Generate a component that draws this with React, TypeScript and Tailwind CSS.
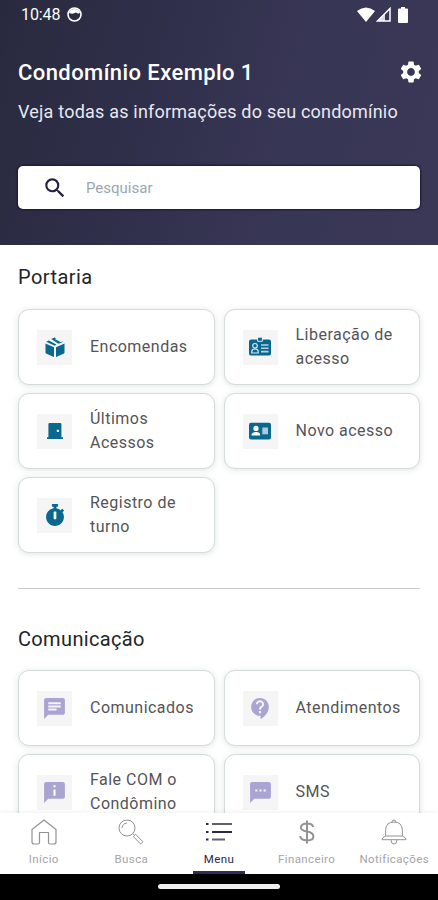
import type { ReactNode } from 'react'
import { MdChat, MdContactSupport, MdSearch, MdSettings, MdSms } from 'react-icons/md'
import { FaStopwatch } from 'react-icons/fa'

interface MenuItem {
  label: string
  icon:  ReactNode
}

function BoxIcon() {
  return (
    <svg width="20" height="20" viewBox="0 0 20 20" fill="currentColor">
      <path d="M.5 6.6 9 10.2V20L1.5 16.8Q.5 16.4.5 15.4ZM19.5 6.6 11 10.2V20L18.5 16.8Q19.5 16.4 19.5 15.4Z" />
      <path d="M1.2 4.7 3.8 3.4 11.4 7.4 9.8 8.8ZM6.2 2.1 9.6.4 11.2 1.2 9.8 2 15.4 5 18.8 4.4 13.4 6.7Z" />
    </svg>
  )
}

function BadgeIcon() {
  return (
    <svg width="22" height="20" viewBox="0 0 22 20" fill="none" stroke="#fff">
      <path d="M2 2.5H9V.8H13V2.5H20Q22 2.5 22 4.5V16.5Q22 18.5 20 18.5H2Q0 18.5 0 16.5V4.5Q0 2.5 2 2.5Z" fill="currentColor" stroke="none" />
      <path d="M8.6 2V4.3H13.4V2" strokeWidth="1" strokeOpacity=".8" />
      <circle cx="6" cy="8.8" r="2.3" strokeWidth="1.2" strokeOpacity=".85" />
      <path d="M2.8 16V14.5Q2.8 12 6 12T9.2 14.5V16Z" strokeWidth="1.2" strokeOpacity=".85" />
      <path d="M12 8H19.5M12 11.3H19.5M12 14.6H19.5" strokeWidth="1.6" strokeOpacity=".7" />
    </svg>
  )
}

function DoorIcon() {
  return (
    <svg width="16" height="18" viewBox="0 0 16 18" fill="currentColor">
      <path fillRule="evenodd" d="M2.6 1H13.2Q14.4 1 14.4 2.2V15.2H16V17H0V15.2H1.4V2.2Q1.4 1 2.6 1ZM9.8 7.8V10H12V7.8Z" />
    </svg>
  )
}

function CardIcon() {
  return (
    <svg width="22" height="18" viewBox="0 0 22 18">
      <rect y=".8" width="22" height="16.6" rx="2" fill="currentColor" />
      <circle cx="7" cy="6.4" r="2.6" fill="#fff" />
      <path d="M2.4 13.6Q2.6 10 7 10T11.2 13.6Z" fill="#fff" />
      <path d="M13.3 5.5H19V12.3H13.3Z" fill="#fff" fillOpacity=".65" />
    </svg>
  )
}

function InfoChatIcon() {
  return (
    <svg width="25" height="25" viewBox="0 0 24 24" fill="currentColor">
      <path d="M4 2H20Q22 2 22 4V16Q22 18 20 18H6L2 22V4Q2 2 4 2Z" />
      <path d="M11 5H13V7H11ZM11 9H13V15H11Z" fill="#fff" />
    </svg>
  )
}

const PORTARIA: MenuItem[] = [
  { label: 'Encomendas',         icon: <BoxIcon /> },
  { label: 'Liberação de acesso', icon: <BadgeIcon /> },
  { label: 'Últimos Acessos',    icon: <DoorIcon /> },
  { label: 'Novo acesso',        icon: <CardIcon /> },
  { label: 'Registro de turno',  icon: <FaStopwatch size={22} /> },
]

const COMUNICACAO: MenuItem[] = [
  { label: 'Comunicados',        icon: <MdChat size={25} /> },
  { label: 'Atendimentos',       icon: <MdContactSupport size={25} /> },
  { label: 'Fale COM o Condômino', icon: <InfoChatIcon /> },
  { label: 'SMS',                icon: <MdSms size={25} /> },
]

const TABS: MenuItem[] = [
  {
    label: 'Início',
    icon: (
      <svg width="26" height="26" viewBox="0 0 26 26" fill="none" stroke="currentColor" strokeWidth="1.2">
        <path d="M1 10.5 13 1 25 10.5V23Q25 25 23 25H19Q17.5 25 17.5 23.5V13.5H8.5V23.5Q8.5 25 7 25H3Q1 25 1 23Z" strokeLinejoin="round" />
      </svg>
    ),
  },
  {
    label: 'Busca',
    icon: (
      <svg width="26" height="26" viewBox="0 0 26 26" fill="none" stroke="currentColor" strokeWidth="1">
        <circle cx="9" cy="9" r="8" />
        <path d="M4 9Q4.3 4.5 9 4M14.8 14.6 16.8 16.5M15.4 17.7 17.7 15.4 25 22.8 22.7 25Z" />
      </svg>
    ),
  },
  {
    label: 'Menu',
    icon: (
      <svg width="27" height="26" viewBox="0 0 27 26" fill="none" stroke="currentColor" strokeWidth="2">
        <path d="M1 5H3.5M1 13H3.5M1 20.5H3.5M7 13H27" />
        <path d="M7 5H27M7 20.5H20" strokeOpacity=".75" />
      </svg>
    ),
  },
  {
    label: 'Financeiro',
    icon: (
      <svg width="16" height="26" viewBox="0 0 16 26" fill="none" stroke="currentColor" strokeWidth="2">
        <path d="M8 1.5V24.5M14.2 8Q13.6 4.5 8 4.5T1.8 8.6Q1.8 11.5 8 12.6T14.4 17.2Q14.4 21.4 8 21.4T1.2 17.2" />
      </svg>
    ),
  },
  {
    label: 'Notificações',
    icon: (
      <svg width="26" height="26" viewBox="0 0 26 26" fill="none" stroke="currentColor" strokeWidth="1">
        <path d="M11 3.2Q11 1 13 1T15 3.2M4.6 17V11.5Q4.6 3 13 3T21.4 11.5V17M4.6 17Q1 18.5 1 20.7H25Q25 18.5 21.4 17ZM10 21Q10.2 25 13 25T16 21" />
      </svg>
    ),
  },
]

function StatusBar() {
  return (
    <div className="flex h-[29px] items-center justify-between pl-[21px] pr-[30px]">
      <div className="flex items-center gap-[7px]">
        <span className="text-[16px] leading-[29px] tracking-[-0.1px]">10:48</span>
        <svg width="15" height="15" viewBox="0 0 15 15" fill="none" stroke="currentColor">
          <circle cx="7.5" cy="7.5" r="6.5" strokeWidth="1.6" />
          <path d="M2 6Q3 2 7.5 2T13 6Q11 7 9 5.5Q6 7.5 2 6Z" fill="currentColor" stroke="none" />
        </svg>
      </div>
      <div className="flex items-center">
        <svg width="18" height="15" viewBox="0 0 18 15" fill="currentColor">
          <path d="M0 4Q9-3 18 4L9 15Z" />
        </svg>
        <svg width="15" height="15" viewBox="0 0 15 15" className="ml-px">
          <path d="M1.5 14 14 1.5V14Z" fill="none" stroke="currentColor" strokeWidth="1.5" />
          <path d="M1 14 9 6.5V14Z" fill="currentColor" fillOpacity=".8" />
        </svg>
        <svg width="10" height="16" viewBox="0 0 10 16" fill="currentColor" className="ml-[7px]">
          <path d="M3 0H7V1.5H9Q10 1.5 10 2.5V15Q10 16 9 16H1Q0 16 0 15V2.5Q0 1.5 1 1.5H3Z" />
        </svg>
      </div>
    </div>
  )
}

function MenuGrid({ items, color }: { items: MenuItem[]; color: string }) {
  return (
    <div className="grid grid-cols-2 gap-x-[9px] gap-y-2">
      {items.map(item => (
        <button
          key={item.label}
          type="button"
          className="flex h-[76px] items-center rounded-[11px] border border-[#d5dadc] bg-white pl-[18px] text-left shadow-[0_1px_6px_rgba(90,110,110,0.18)]"
        >
          <span className={`flex h-[35px] w-[35px] shrink-0 items-center justify-center bg-[#f5f5f6] ${color}`}>
            {item.icon}
          </span>
          <span className="ml-[18px] w-[108px] text-[16px] leading-6 tracking-[0.48px] text-[#545458]">
            {item.label}
          </span>
        </button>
      ))}
    </div>
  )
}

export default function App() {
  return (
    <div className="flex h-[900px] w-[438px] flex-col overflow-hidden bg-white font-[Roboto,sans-serif]">
      <header className="h-[245px] shrink-0 bg-[linear-gradient(105deg,#29293e_0%,#30304c_38%,#383655_65%,#3a3855_100%)] text-white">
        <StatusBar />
        <div className="mt-[26px] flex h-[34px] items-center justify-between pl-[18px] pr-[14px]">
          <h1 className="text-[22px] font-medium tracking-[0.42px]">Condomínio Exemplo 1</h1>
          <MdSettings size={26} />
        </div>
        <p className="mt-[10px] pl-[18px] text-[18px] leading-[26px] tracking-[0.21px] text-[#e8e8f0]">
          Veja todas as informações do seu condomínio
        </p>
        <div className="mx-[18px] mt-[41px] flex h-[43px] items-center rounded-[5px] bg-white pl-[24px] shadow-[0_0_2px_1px_#1c183d]">
          <MdSearch size={26} className="text-[#25213f]" />
          <span className="ml-[18px] pt-px text-[15px] text-[#9aa7af]">Pesquisar</span>
        </div>
      </header>

      <main className="min-h-0 flex-1 overflow-hidden px-[18px]">
        <h2 className="mt-[16px] mb-[16px] text-[20px] leading-8 tracking-[0.45px] text-[#242426]">Portaria</h2>
        <MenuGrid items={PORTARIA} color="text-[#0a688f]" />
        <hr className="mt-[35px] border-[#c9cbcd]" />
        <h2 className="mt-[34px] mb-[15px] text-[20px] leading-8 tracking-[0.35px] text-[#242426]">Comunicação</h2>
        <MenuGrid items={COMUNICACAO} color="text-[#aaa4d2]" />
      </main>

      <nav className="grid h-[61px] shrink-0 grid-cols-5 bg-white shadow-[0_-1px_5px_rgba(0,0,0,0.06)]">
        {TABS.map(tab => {
          const active = tab.label === 'Menu'
          return (
            <button
              key={tab.label}
              type="button"
              className={`relative flex flex-col items-center pt-[6px] ${active ? 'text-[#2b2945]' : 'text-[#939396]'}`}
            >
              {tab.icon}
              <span className={`mt-[6px] text-[11.5px] leading-4 tracking-[0.38px] ${active ? '' : 'text-[#a5a5a8]'}`}>
                {tab.label}
              </span>
              {active && <span className="absolute bottom-0 h-[3px] w-[52px] bg-[#302d55]" />}
            </button>
          )
        })}
      </nav>

      <div className="flex h-[26px] shrink-0 justify-center bg-black pt-[10px]">
        <div className="h-[5px] w-[122px] rounded-full bg-[#efefef]" />
      </div>
    </div>
  )
}
